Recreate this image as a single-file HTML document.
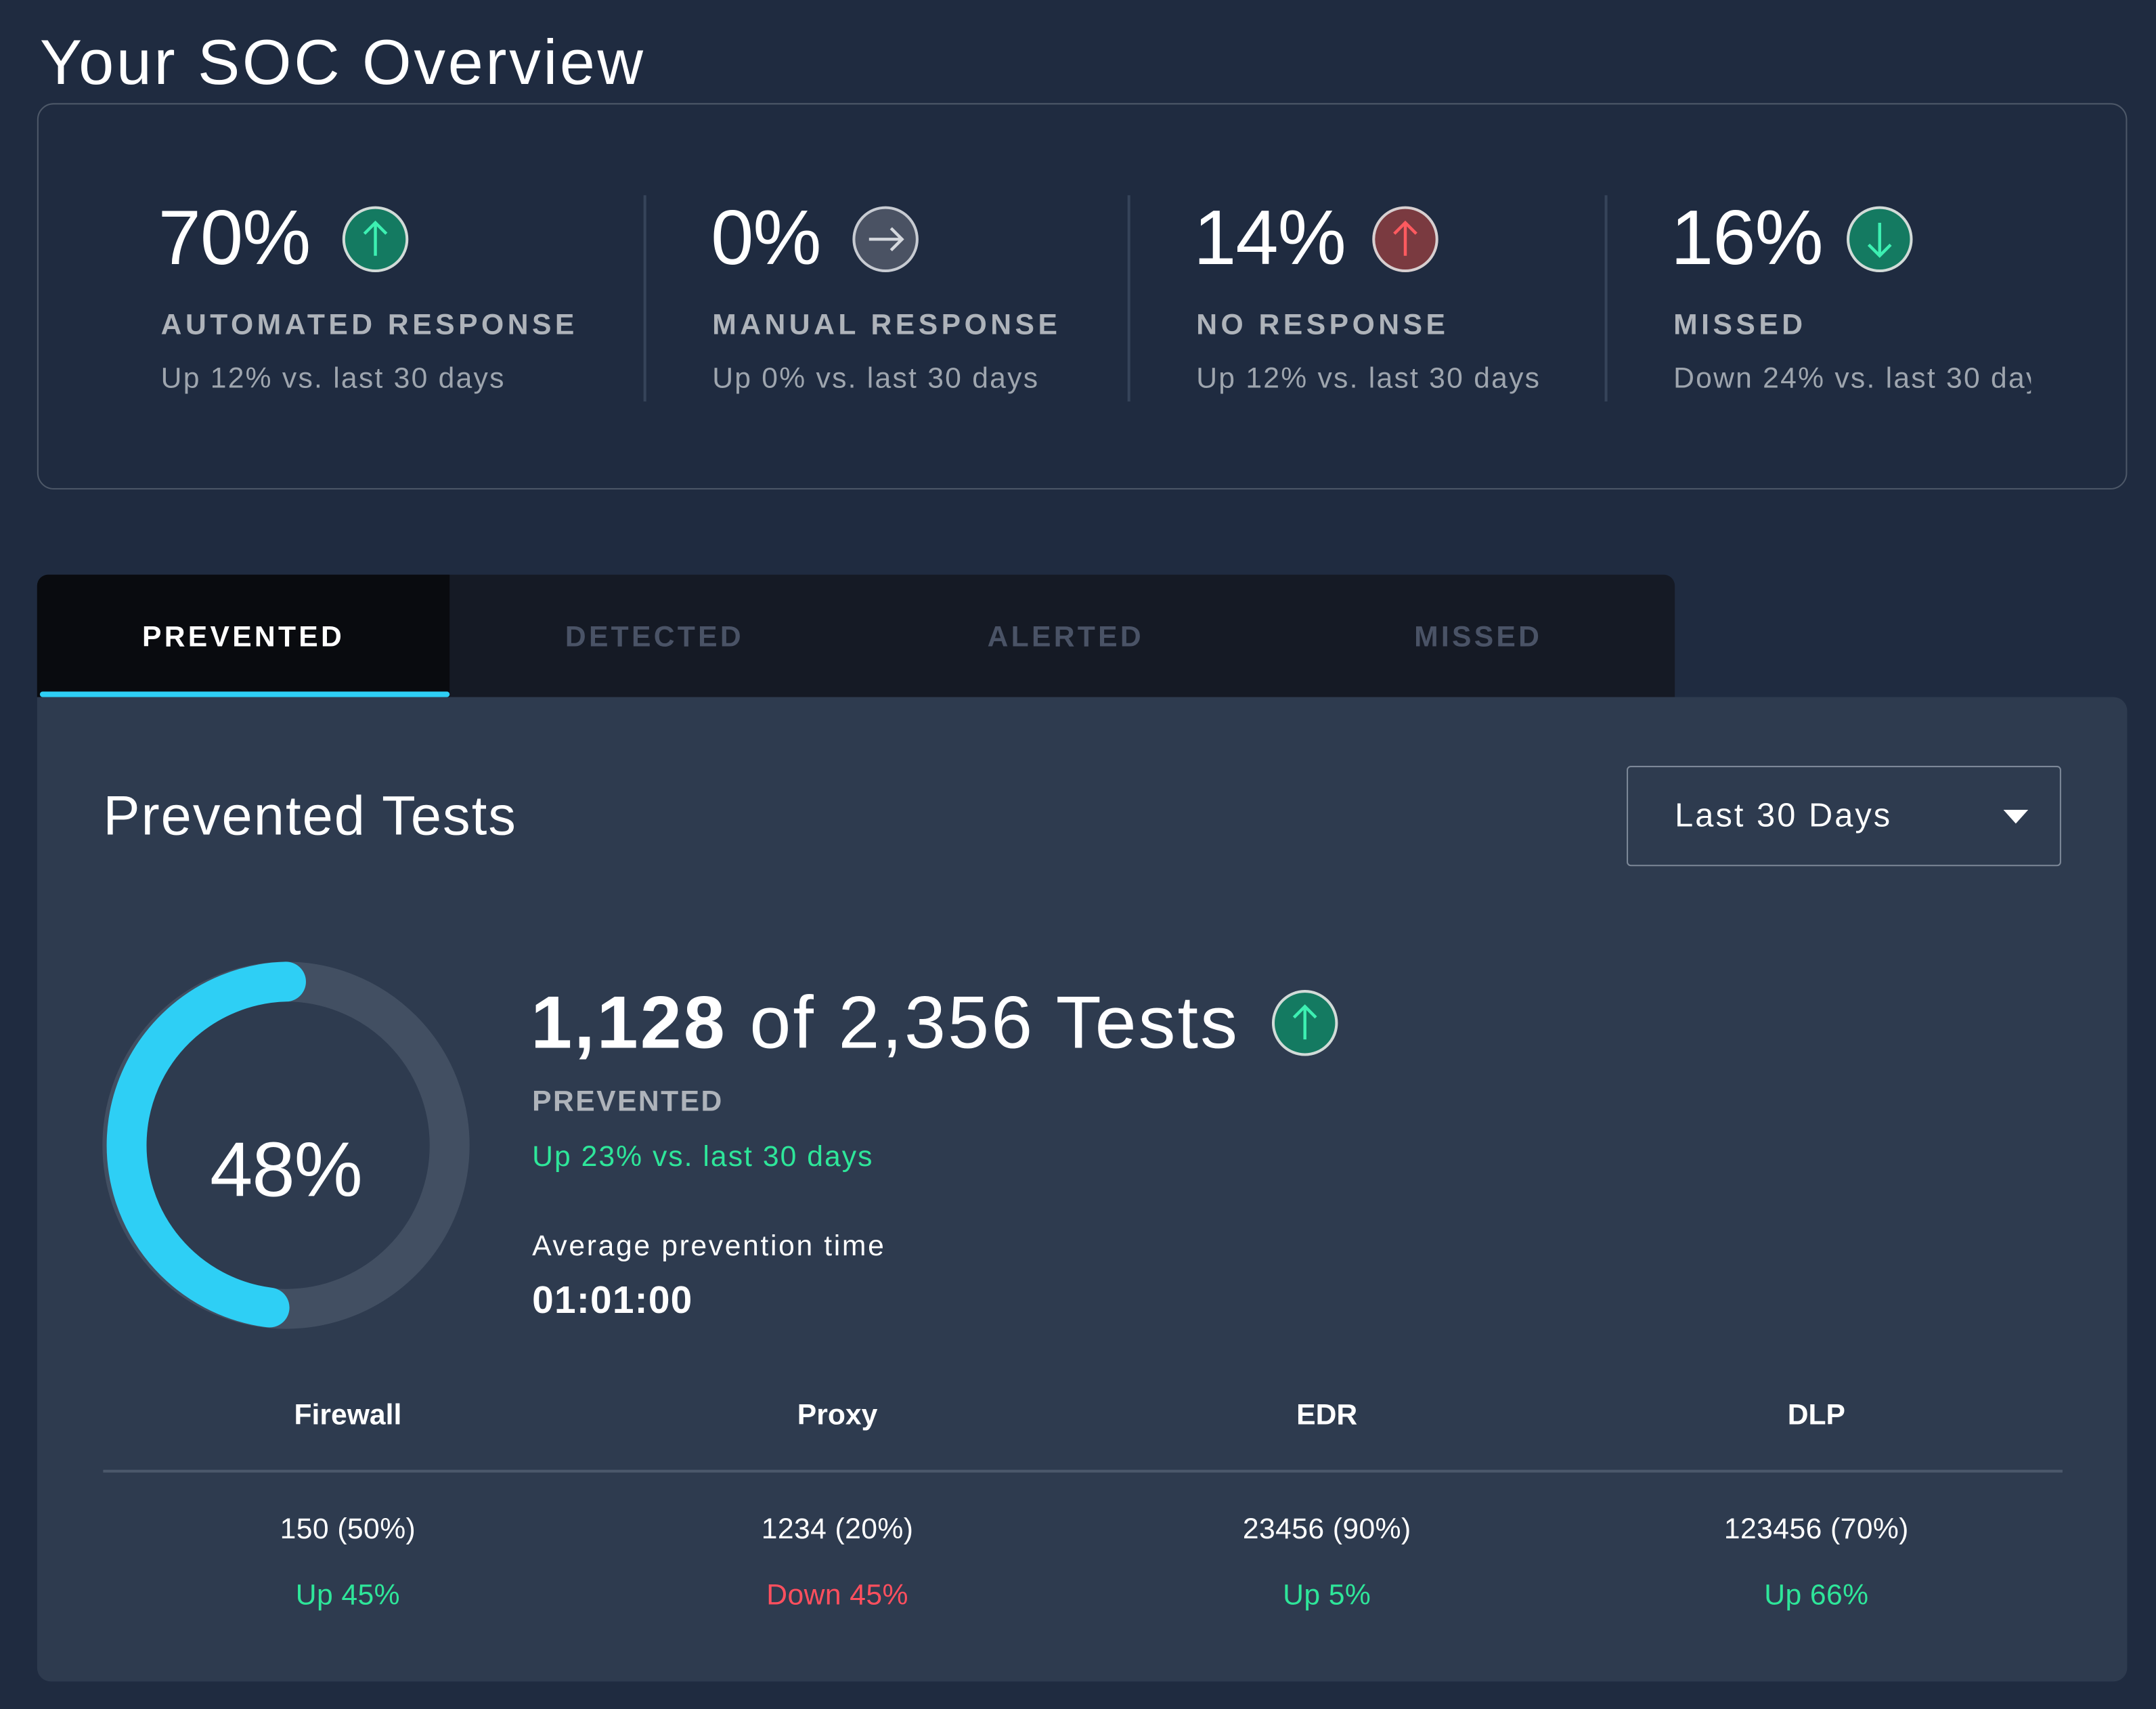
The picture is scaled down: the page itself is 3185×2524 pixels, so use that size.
<!DOCTYPE html>
<html><head><meta charset="utf-8"><style>
html,body{margin:0;padding:0;background:#1f2b40;width:3185px;height:2524px;overflow:hidden}
#w{position:absolute;left:0;top:0;width:1568px;height:1243px;transform:scale(2.0313,2.0306);transform-origin:0 0;font-family:"Liberation Sans",sans-serif;color:#fff}
.a{position:absolute;white-space:nowrap}
.big{font-size:56px;line-height:60px;letter-spacing:-0.5px}
.lbl{font-size:21px;line-height:24px;font-weight:bold;letter-spacing:2.7px;color:#aeb3ba}
.sub{font-size:21px;line-height:24px;color:#9ea5ae;letter-spacing:1.1px}
.div{position:absolute;top:142px;width:1.5px;height:150px;background:#36445a}
.tab{position:absolute;top:452px;font-size:21px;line-height:24px;font-weight:bold;letter-spacing:2.1px;color:#4a5366;transform:translateX(-50%)}
.c{transform:translateX(-50%);text-align:center}
.th{font-size:21px;line-height:24px;font-weight:bold;color:#fff}
.tv{font-size:21px;line-height:24px;color:#fff;letter-spacing:0.2px}
.g{color:#2ee69a}.r{color:#ff4f5e}
</style></head><body><div id="w">
<div class="a" style="left:29px;top:18px;font-size:46px;line-height:54px;letter-spacing:1.8px">Your SOC Overview</div>
<div class="a" style="left:27px;top:75px;width:1518px;height:279px;border:1.5px solid #4d5868;border-radius:12px"></div>

<div class="a big" style="left:115px;top:143px">70%</div>
<svg class="a" style="left:248px;top:149px" width="50" height="50"><circle cx="25" cy="25" r="23" fill="#147a61" stroke="#d2dbd8" stroke-width="2"/><path d="M25 37V13M17 21l8-8 8 8" stroke="#3df0b2" stroke-width="2.2" fill="none"/></svg>
<div class="a lbl" style="left:117px;top:225px">AUTOMATED RESPONSE</div>
<div class="a sub" style="left:117px;top:264px">Up 12% vs. last 30 days</div>
<div class="div" style="left:468px"></div>

<div class="a big" style="left:517px;top:143px">0%</div>
<svg class="a" style="left:619px;top:149px" width="50" height="50"><circle cx="25" cy="25" r="23" fill="#4a5263" stroke="#c7cbd2" stroke-width="2"/><path d="M13 25h24M29 17l8 8-8 8" stroke="#d6d9de" stroke-width="2.2" fill="none"/></svg>
<div class="a lbl" style="left:518px;top:225px">MANUAL RESPONSE</div>
<div class="a sub" style="left:518px;top:264px">Up 0% vs. last 30 days</div>
<div class="div" style="left:820px"></div>

<div class="a big" style="left:868px;top:143px">14%</div>
<svg class="a" style="left:997px;top:149px" width="50" height="50"><circle cx="25" cy="25" r="23" fill="#7a3a40" stroke="#d7cfd0" stroke-width="2"/><path d="M25 37V13M17 21l8-8 8 8" stroke="#ff5a5f" stroke-width="2.2" fill="none"/></svg>
<div class="a lbl" style="left:870px;top:225px">NO RESPONSE</div>
<div class="a sub" style="left:870px;top:264px">Up 12% vs. last 30 days</div>
<div class="div" style="left:1167px"></div>

<div class="a big" style="left:1215px;top:143px">16%</div>
<svg class="a" style="left:1342px;top:149px" width="50" height="50"><circle cx="25" cy="25" r="23" fill="#147a61" stroke="#d2dbd8" stroke-width="2"/><path d="M25 13v24M17 29l8 8 8-8" stroke="#3df0b2" stroke-width="2.2" fill="none"/></svg>
<div class="a lbl" style="left:1217px;top:225px">MISSED</div>
<div class="a sub" style="left:1217px;top:264px;width:260px;overflow:hidden">Down 24% vs. last 30 days</div>

<div class="a" style="left:27px;top:418px;width:1191px;height:89px;background:#151a25;border-radius:8px 8px 0 0"></div>
<div class="a" style="left:27px;top:418px;width:300px;height:89px;background:#090b0f;border-radius:8px 0 0 0"></div>
<div class="a" style="left:29px;top:503px;width:298px;height:4px;background:#2ecff5;border-radius:2px"></div>
<div class="tab" style="left:177px;color:#fff">PREVENTED</div>
<div class="tab" style="left:476px">DETECTED</div>
<div class="tab" style="left:775px">ALERTED</div>
<div class="tab" style="left:1075px">MISSED</div>

<div class="a" style="left:27px;top:507px;width:1520px;height:716px;background:#2e3b4f;border-radius:0 10px 10px 10px"></div>
<div class="a" style="left:75px;top:570px;font-size:40px;line-height:48px;letter-spacing:1px">Prevented Tests</div>
<div class="a" style="left:1183px;top:557px;width:314px;height:71px;border:1.5px solid #7d8898;border-radius:3px"></div>
<div class="a" style="left:1218px;top:580px;font-size:24px;line-height:28px;letter-spacing:1.5px">Last 30 Days</div>
<svg class="a" style="left:1456px;top:588px" width="20" height="12"><path d="M1 1h18l-9 10z" fill="#fff"/></svg>

<svg class="a" style="left:0;top:0" width="400" height="1100"><circle cx="208" cy="833" r="119" fill="none" stroke="#424f62" stroke-width="29"/><path d="M208 714A119 119 0 0 0 196 951" fill="none" stroke="#2ecff5" stroke-width="29" stroke-linecap="round"/></svg>
<div class="a c" style="left:208px;top:820px;font-size:56px;line-height:62px;letter-spacing:-0.5px">48%</div>

<div class="a" style="left:386px;top:713px;font-size:54px;line-height:62px;letter-spacing:1.5px"><b>1,128</b> of 2,356 Tests</div>
<svg class="a" style="left:924px;top:719px" width="50" height="50"><circle cx="25" cy="25" r="23" fill="#147a61" stroke="#d2dbd8" stroke-width="2"/><path d="M25 37V13M17 21l8-8 8 8" stroke="#3df0b2" stroke-width="2.2" fill="none"/></svg>
<div class="a lbl" style="left:387px;top:790px;letter-spacing:1.2px">PREVENTED</div>
<div class="a" style="left:387px;top:830px;font-size:21px;line-height:24px;color:#2ee69a;letter-spacing:1px">Up 23% vs. last 30 days</div>
<div class="a" style="left:387px;top:895px;font-size:21px;line-height:24px;letter-spacing:1.3px">Average prevention time</div>
<div class="a" style="left:387px;top:930px;font-size:28px;line-height:32px;font-weight:bold;letter-spacing:0.6px">01:01:00</div>

<div class="a th c" style="left:253px;top:1018px">Firewall</div>
<div class="a th c" style="left:609px;top:1018px">Proxy</div>
<div class="a th c" style="left:965px;top:1018px">EDR</div>
<div class="a th c" style="left:1321px;top:1018px">DLP</div>
<div class="a" style="left:75px;top:1069px;width:1425px;height:1.5px;background:#4b586b"></div>
<div class="a tv c" style="left:253px;top:1101px">150 (50%)</div>
<div class="a tv c" style="left:609px;top:1101px">1234 (20%)</div>
<div class="a tv c" style="left:965px;top:1101px">23456 (90%)</div>
<div class="a tv c" style="left:1321px;top:1101px">123456 (70%)</div>
<div class="a tv c g" style="left:253px;top:1149px">Up 45%</div>
<div class="a tv c r" style="left:609px;top:1149px">Down 45%</div>
<div class="a tv c g" style="left:965px;top:1149px">Up 5%</div>
<div class="a tv c g" style="left:1321px;top:1149px">Up 66%</div>
</div></body></html>
